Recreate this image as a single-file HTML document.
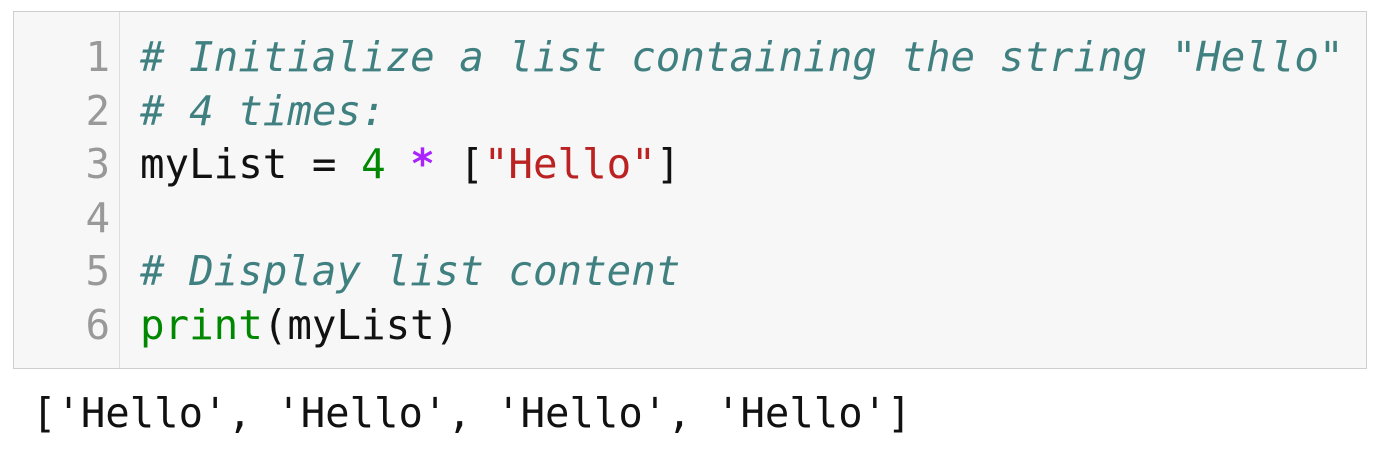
<!DOCTYPE html>
<html><head><style>
body{margin:0;width:1384px;height:452px;background:#fff;overflow:hidden;font-family:"DejaVu Sans Mono","Liberation Mono",monospace;}
.box{position:absolute;left:13px;top:11px;width:1352px;height:356px;border:1px solid #cfcfcf;background:#f7f7f7;}
.gut{position:absolute;left:0;top:0;width:105px;height:100%;border-right:1px solid #ddd;background:#f7f7f7;}
.ln,.code{position:absolute;top:19px;font-size:40.8px;line-height:53.6px;white-space:pre;}
.ln{left:0;width:96px;text-align:right;color:#999;}
.code{left:126px;color:#111;}
.c{color:#408080;font-style:italic}
.n{color:#080}.o{color:#a2f;font-weight:bold}.s{color:#b22}.b{color:#080}
.out{position:absolute;left:32px;top:386px;font-size:40.6px;line-height:54px;white-space:pre;color:#111;}
</style></head><body>
<div class="box"><div class="gut"></div>
<div class="ln">1
2
3
4
5
6</div>
<div class="code"><span class="c"># Initialize a list containing the string "Hello"</span>
<span class="c"># 4 times:</span>
myList = <span class="n">4</span> <span class="o">*</span> [<span class="s">"Hello"</span>]

<span class="c"># Display list content</span>
<span class="b">print</span>(myList)</div>
</div>
<div class="out">['Hello', 'Hello', 'Hello', 'Hello']</div>
</body></html>
